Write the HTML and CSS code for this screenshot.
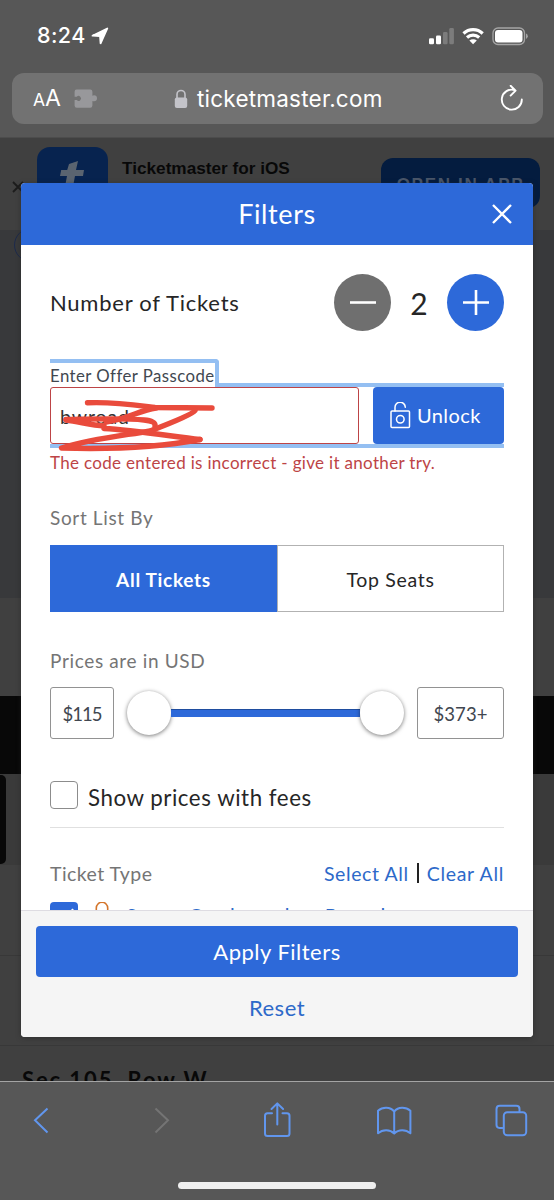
FILE: index.html
```html
<!DOCTYPE html>
<html lang="en">
<head>
<meta charset="utf-8">
<title>Ticketmaster Filters</title>
<link rel="stylesheet" href="styles.css">
</head>
<body>
<div class="phone">
  <header class="chrome">
    <div class="status">
      <span class="time">8:24</span>
      <svg class="loc" width="18" height="18" viewBox="0 0 18 18"><path d="M16.300 1.500 9.600 16.300 9 9.200 1.500 8.700z" fill="#fff" stroke="#fff" stroke-width="1.800" stroke-linejoin="round"/></svg>
      <svg class="signals" width="100" height="20" viewBox="429 25 100 20">
        <g fill="#fff"><rect x="429" y="37.300" width="5" height="6" rx="1.300"/><rect x="436" y="34.500" width="5" height="8.800" rx="1.300"/></g>
        <g fill="#7c7c7c"><rect x="443" y="31" width="4.600" height="12.300" rx="1.300"/><rect x="449.300" y="27" width="4.600" height="16.300" rx="1.300"/></g>
        <path d="M463.500 32.500a14 14 0 0 1 19.200 0M467 36.500a9 9 0 0 1 12.200 0" fill="none" stroke="#fff" stroke-width="3.200"/>
        <path d="M469.400 39.600a5.500 5.500 0 0 1 7.400 0l-3.700 3.700z" fill="#fff"/>
        <rect x="493" y="27" width="31.500" height="16.500" rx="5" fill="none" stroke="#a5a5a5" stroke-width="1.300"/>
        <rect x="495" y="29" width="27.500" height="12.500" rx="3" fill="#fff"/>
        <path d="M526 32.500q1.800.8 1.800 2.700t-1.800 2.700z" fill="#a5a5a5"/>
      </svg>
    </div>
    <div class="urlbar">
      <span class="aa"><small>A</small>A</span>
      <svg class="puzzle" width="23" height="20" viewBox="0 0 23 20"><path d="M2.500.5h13.700q2.200 0 2.200 2.200v4q.6-.4 1.600-.4a3 3 0 0 1 0 6q-1 0-1.600-.4v4.600q0 2.200-2.200 2.200H2.800q-2.200 0-2.200-2.200v-5.500h2.200a2.400 2.400 0 1 0 0-3.200H.6V2.700Q.6.5 2.500.5z" fill="#98989b"/></svg>
      <svg class="lock" width="14" height="20" viewBox="0 0 14 20"><path d="M3 10V5.500a4 4 0 0 1 8 0V10" fill="none" stroke="#c3c3c9" stroke-width="1.600"/><rect x=".8" y="8.500" width="12.400" height="10.500" rx="2" fill="#c3c3c9"/></svg>
      <span class="host">ticketmaster.com</span>
      <svg class="reload" width="24" height="28" viewBox="0 0 24 28"><path d="M14.500 5A10 10 0 1 0 21.800 14.500M10.600.8l5 4.800-5 5" fill="none" stroke="#fff" stroke-width="1.900" stroke-linecap="round" stroke-linejoin="round"/></svg>
    </div>
  </header>

  <main class="page">
    <section class="banner">
      <svg class="bx" width="12" height="12" viewBox="0 0 12 12"><path d="M1 1l10 10M11 1L1 11" stroke="#1c1c1c" stroke-width="1.800"/></svg>
      <div class="appicon"><svg width="70" height="60" viewBox="0 0 70 60"><path d="M32 17l9-3-2 9h8l-1 6h-8l-3 16h-8l3-16h-7l1.200-6h6z" fill="#5a6470"/></svg></div>
      <div class="apptitle">Ticketmaster for iOS</div>
      <div class="openapp">OPEN IN APP</div>
    </section>
    <section class="map"><i class="ring"></i></section>
    <section class="gap"></section>
    <section class="black"></section>
    <section class="tabs"><i class="tab"></i></section>
    <section class="item"></section>
    <section class="item"></section>
    <section class="seat">Sec 105, Row W</section>
  </main>

  <nav class="toolbar">
    <svg class="tools" width="554" height="119" viewBox="0 1081 554 119" fill="none" stroke="#6196ee" stroke-width="2" stroke-linejoin="round" stroke-linecap="round">
      <path d="M47.500 1108.500 35 1120.300l12.500 12.200" stroke-linecap="butt" stroke-linejoin="miter"/>
      <path d="M155.500 1108.500l12.500 11.800-12.500 12.200" stroke="#747474" stroke-linecap="butt" stroke-linejoin="miter"/>
      <path d="M272 1113.300h-4.500q-2.500 0-2.500 2.500v17.700q0 2.500 2.500 2.500h19.500q2.500 0 2.500-2.500v-17.700q0-2.500-2.500-2.500H282.500M277.300 1124.500v-20.800M271.500 1109l5.800-5.600 5.800 5.600"/>
      <path d="M394.200 1111.500c-4-4.800-11.500-4.800-16.200-.7v22.500c4.700-4.200 12-4.200 16.200.3 4.200-4.500 11.500-4.500 16.200-.3v-22.500c-4.700-4.100-12.200-4.100-16.200.7zv22"/>
      <path d="M502.500 1128h-3q-3-.3-3-3v-16q0-3.300 3.300-3.300h16.500q3.200 0 3.200 3.200v2.500"/>
      <rect x="503.800" y="1112.300" width="22.400" height="23" rx="3.500"/>
    </svg>
    <i class="homebar"></i>
  </nav>

  <div class="modal">
    <div class="mhead"><span class="mtitle">Filters</span>
      <svg class="close" width="20" height="20" viewBox="0 0 20 20"><path d="M1 1l18 18M19 1L1 19" stroke="#fff" stroke-width="2.300"/></svg>
    </div>
    <div class="mbody">
      <div class="qty">
        <span class="qlabel">Number of Tickets</span>
        <span class="round minus"><svg width="26" height="26" viewBox="0 0 26 26"><path d="M0 12.500h26" stroke="#fff" stroke-width="2.600"/></svg></span>
        <span class="count">2</span>
        <span class="round"><svg width="26" height="26" viewBox="0 0 26 26"><path d="M0 12.500h26M13 0v25" stroke="#fff" stroke-width="2.600"/></svg></span>
      </div>
      <div class="passhead"><label class="passlabel"><span>Enter Offer Passcode</span></label><i class="band"></i></div>
      <div class="passrow">
        <div class="input"><span>bwroad</span></div>
        <div class="unlock">
          <svg width="21" height="27" viewBox="0 0 21 27" fill="none" stroke="#fff" stroke-width="1.500"><rect x="1" y="9" width="18.500" height="16.500" rx="1"/><path d="M5 9V5.500a4.900 4.900 0 0 1 10.300-.3" stroke-linecap="round"/><circle cx="10.300" cy="17.300" r="3.800"/></svg>
          <span>Unlock</span>
        </div>
        <svg class="scribble" width="180" height="80" viewBox="50 380 180 80" fill="none" stroke="#e94b3c" stroke-width="5.400" stroke-linecap="round" stroke-linejoin="round">
          <path d="M87.500 402.800C112 401.500 135 405 155 407.500L212 408"/>
          <path d="M156 408C140 410 128 419 106 422"/>
          <path d="M66 419.500C90 419 125 418 144 420Q156 421 155 426"/>
          <path d="M66 420C80 422 92 425 104 426M104 428.500C132 430 170 436 200 439.500"/>
          <path d="M195 410.500Q192 415 150 431C120 436 90 439 61.500 448C110 449.500 155 448 200 439.500"/>
        </svg>
      </div>
      <i class="band under"></i>
      <div class="error"><span>The code entered is incorrect - give it another try.</span></div>
      <div class="sub sort"><span>Sort List By</span></div>
      <div class="segs"><div class="seg on"><span>All Tickets</span></div><div class="seg off"><span>Top Seats</span></div></div>
      <div class="sub prices"><span>Prices are in USD</span></div>
      <div class="range">
        <div class="pbox low"><span>$115</span></div>
        <div class="slider"><i class="knob"></i><i class="track"></i><i class="knob"></i></div>
        <div class="pbox high"><span>$373+</span></div>
      </div>
      <div class="fees"><i class="check"></i><span>Show prices with fees</span></div>
      <div class="types"><span class="tt">Ticket Type</span><span class="sel">Select All</span><i class="bar"></i><span class="clr">Clear All</span></div>
      <div class="option">
        <svg width="28" height="28" viewBox="0 0 28 28"><rect width="28" height="28" rx="4" fill="#2d69d9"/><path d="M6 14l6 6L23.500 7.500" fill="none" stroke="#fff" stroke-width="3"/></svg>
        <svg class="olock" width="14" height="28" viewBox="0 0 14 28" fill="none" stroke="#d4752b" stroke-width="1.600"><path d="M1.300 13V6a5.200 5.200 0 0 1 11.400 0v7"/></svg>
        <span>Some Cardmember Presale</span>
      </div>
    </div>
    <div class="mfoot"><div class="apply"><span>Apply Filters</span></div><div class="reset"><span>Reset</span></div></div>
  </div>
</div>
</body>
</html>
```
FILE: styles.css
```css
* { box-sizing: border-box; }
body { margin: 0; font-family: Lato, "Open Sans", sans-serif; white-space: nowrap; }
i { display: block; }
svg { display: block; flex: none; }
.phone { position: relative; width: 554px; height: 1200px; overflow: hidden; display: flex; flex-direction: column; background: #404040; }

.chrome { height: 138px; flex: none; background: #575757; font-family: Inter, sans-serif; color: #fff; border-bottom: 1px solid #4c4c4c; }
.status { height: 73px; display: flex; align-items: center; padding: 0 25px 2px 37px; }
.time { font-size: 21.500px; font-weight: 500; letter-spacing: .4px; width: 54px; line-height: 24px; padding-bottom: 1px; }
.signals { margin-left: auto; }
.urlbar { margin: 0 11px 0 12px; height: 51px; border-radius: 12px; background: #727272; display: flex; align-items: center; padding: 0 19px 0 21px; }
.aa { font-size: 23px; width: 41px; line-height: 24px; }
.aa small { font-size: 17.500px; }
.lock { margin-left: 77px; }
.host { margin-left: 9px; font-size: 22.500px; letter-spacing: .22px; }
.reload { margin-left: auto; }

.page { height: 943px; flex: none; overflow: hidden; }
.banner { height: 92px; display: flex; align-items: flex-start; }
.bx { margin: 43px 0 0 12px; }
.appicon { margin: 9px 0 0 13px; width: 71px; height: 70px; border-radius: 13px; background: #07234f; overflow: hidden; }
.apptitle { margin: 19px 0 0 14px; font: bold 17.200px/22px "Liberation Sans", sans-serif; color: #080808; width: 259px; }
.openapp { margin-top: 20px; width: 159px; height: 50px; border-radius: 12px; background: #041c3f; color: #4a5669; font: bold 17px/54px "Liberation Sans", sans-serif; letter-spacing: 1.700px; text-align: center; }
.map { height: 368px; background: #38393b; overflow: hidden; }
.ring { width: 34px; height: 34px; margin: -2px 0 0 14px; border: 1.500px solid #1c2a4c; border-radius: 50%; }
.gap { height: 98px; background: #404040; }
.black { height: 78px; background: #080808; }
.tabs { height: 91px; background: #3a3a3a; padding-top: 1px; }
.tab { width: 6px; height: 89px; background: #080808; border-radius: 0 5px 5px 0; }
.item { height: 90.500px; border-bottom: 1px solid #383838; }
.seat { padding: 21px 0 0 22px; font-size: 22px; line-height: 26px; font-weight: 700; color: #080808; letter-spacing: 1.900px; }

.toolbar { height: 119px; flex: none; background: #575757; border-top: 1px solid #a4a4a4; }
.tools { margin-top: -1px; }
.homebar { position: relative; width: 198px; height: 7px; margin: -18px auto 0; border-radius: 4px; background: #efefef; }

.modal { position: absolute; left: 21px; top: 183px; width: 512px; height: 854px; border-radius: 4px; overflow: hidden; background: #fff; display: flex; flex-direction: column; box-shadow: 0 1px 5px #2228; }
.mhead { height: 62px; flex: none; background: #2d69d9; color: #fff; display: grid; grid-template-columns: 41px 1fr 41px; align-items: center; }
.mtitle { grid-column: 2; text-align: center; font-size: 27px; letter-spacing: .6px; line-height: 30px; padding-bottom: 1px; }
.mbody { flex: 1; min-height: 0; overflow: hidden; padding: 29px 29px 0; display: flex; flex-direction: column; }
.mbody > * { flex: none; }
.qty { height: 57px; display: flex; align-items: center; font-size: 22px; color: #262626; }
.qlabel { width: 284px; letter-spacing: .75px; }
.round { width: 57px; height: 57px; border-radius: 50%; background: #2d69d9; display: grid; place-items: center; }
.round.minus { background: #6f6f6f; }
.count { width: 56px; text-align: center; font-size: 30px; }
.passhead { margin-top: 28px; height: 28px; display: flex; align-items: flex-end; }
.passlabel { width: 169px; height: 28px; border: solid #94bff2; border-width: 4px 4px 0 0; border-radius: 0 4px 0 0; font-size: 16.800px; line-height: 26px; color: #414750; letter-spacing: .45px; }
.band { flex: 1; height: 4px; background: #94bff2; }
.band.under { flex: none; }
.passrow { position: relative; height: 57px; display: flex; justify-content: space-between; }
.input { width: 309px; border: 1.500px solid #bd4446; border-radius: 3px; padding-left: 9px; font-size: 19.500px; line-height: 57px; color: #333; letter-spacing: .9px; }
.unlock { width: 131px; border-radius: 4px; background: #2d69d9; color: #fff; display: flex; align-items: center; padding: 0 0 1px 17px; gap: 6px; font-size: 20px; letter-spacing: .4px; }
.scribble { position: absolute; left: 0; top: -7px; }
.error { height: 30px; line-height: 30px; font-size: 17px; color: #bd4446; letter-spacing: .32px; }
.sub { height: 24px; line-height: 24px; font-size: 19px; color: #757575; letter-spacing: .65px; }
.sort { margin-top: 28px; }
.segs { margin-top: 15px; height: 67px; display: flex; font-size: 19.500px; letter-spacing: .7px; }
.seg { width: 227px; display: grid; place-items: center; padding-top: 1px; }
.seg.on { background: #2d69d9; color: #fff; font-weight: 700; font-size: 19px; }
.seg.off { border: 1.500px solid #b2b2b2; color: #262626; }
.prices { margin-top: 37px; }
.range { margin-top: 14px; height: 52px; display: flex; justify-content: space-between; }
.pbox { border: 1.500px solid #929292; border-radius: 3px; display: grid; place-items: center; color: #414750; font-size: 18.500px; padding-top: 2px; }
.low { width: 64px; letter-spacing: -1px; }
.high { width: 87px; letter-spacing: .1px; }
.slider { width: 277px; display: flex; align-items: center; }
.knob { width: 44px; height: 44px; border-radius: 50%; background: #fff; box-shadow: 0 1px 4px #0008; }
.track { width: 189px; height: 8px; background: #2d69d9; border-top: 1px solid #1f4d9f; }
.fees { margin-top: 42px; height: 47px; border-bottom: 1px solid #e0e0e0; display: flex; gap: 10px; font-size: 22.300px; line-height: 33px; color: #262626; letter-spacing: .54px; }
.check { width: 28px; height: 28px; border: 1.500px solid #8c8c8c; border-radius: 4px; }
.types { margin-top: 33px; height: 24px; display: flex; align-items: center; font-size: 19.500px; color: #2d69c9; letter-spacing: .6px; }
.tt { color: #757575; margin-right: auto; letter-spacing: .45px; }
.clr { letter-spacing: .7px; }
.bar { width: 2px; height: 20px; background: #222; margin: 0 8px 0 8px; }
.option { margin-top: 17px; height: 28px; display: flex; font-size: 20.500px; line-height: 28px; color: #2d69c9; letter-spacing: 1.350px; }
.olock { margin: 0 17px 0 17px; }
.mfoot { height: 127px; flex: none; background: #f5f5f5; border-top: 1.500px solid #dedce2; padding: 15px 15px 0 15px; text-align: center; font-size: 22px; letter-spacing: .5px; }
.apply { height: 51px; line-height: 52px; border-radius: 4px; background: #2d69d9; color: #fff; }
.reset { margin-top: 15px; line-height: 31px; color: #2d69c9; }
```
